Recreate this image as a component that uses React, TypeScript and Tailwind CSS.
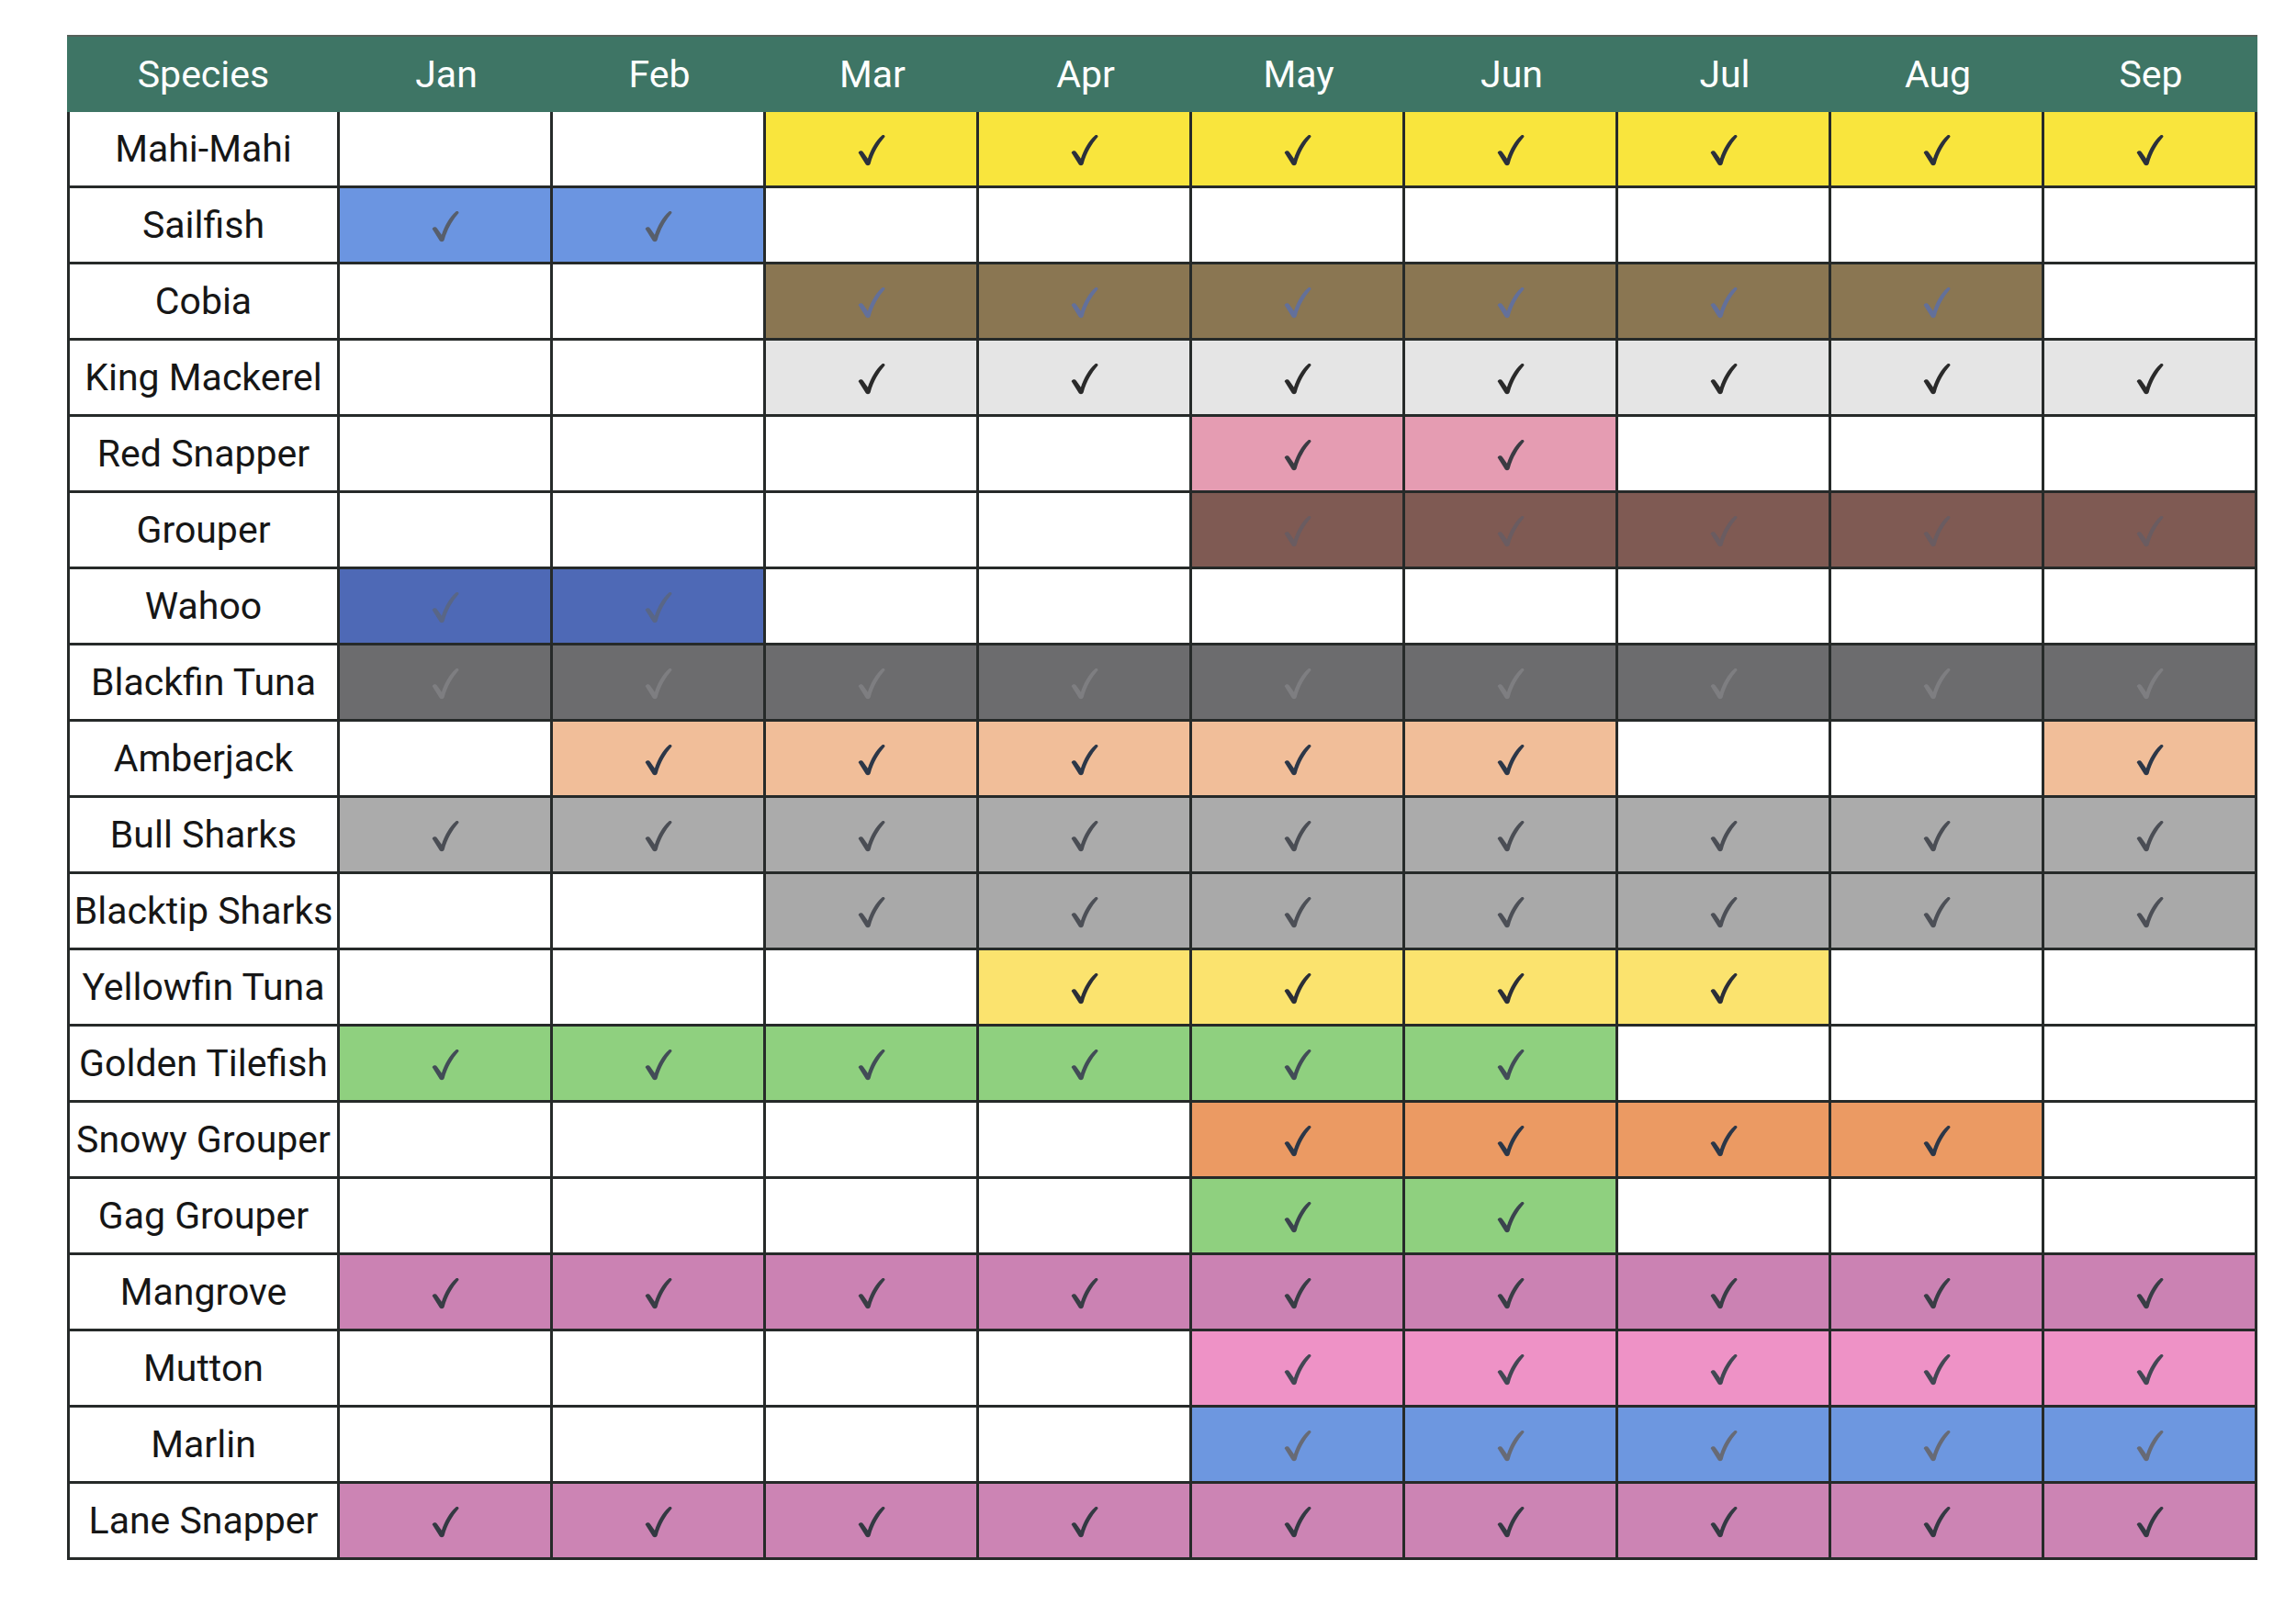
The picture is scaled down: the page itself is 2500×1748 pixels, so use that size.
import React from "react";

const months = ["Jan", "Feb", "Mar", "Apr", "May", "Jun", "Jul", "Aug", "Sep"];

type Row = { name: string; bg: string; check: string; on: number[] };

const rows: Row[] = [
  { name: "Mahi-Mahi", bg: "#f9e53d", check: "#2b303b", on: [2, 3, 4, 5, 6, 7, 8] },
  { name: "Sailfish", bg: "#6b95e1", check: "#575e6b", on: [0, 1] },
  { name: "Cobia", bg: "#8a7652", check: "#63709a", on: [2, 3, 4, 5, 6, 7] },
  { name: "King Mackerel", bg: "#e5e5e5", check: "#2a2a2a", on: [2, 3, 4, 5, 6, 7, 8] },
  { name: "Red Snapper", bg: "#e59cb2", check: "#3a3b42", on: [4, 5] },
  { name: "Grouper", bg: "#7f5a53", check: "#6a5c61", on: [4, 5, 6, 7, 8] },
  { name: "Wahoo", bg: "#4e69b6", check: "#596686", on: [0, 1] },
  { name: "Blackfin Tuna", bg: "#6c6c6e", check: "#7e7e81", on: [0, 1, 2, 3, 4, 5, 6, 7, 8] },
  { name: "Amberjack", bg: "#f1be99", check: "#2c3748", on: [1, 2, 3, 4, 5, 8] },
  { name: "Bull Sharks", bg: "#ababab", check: "#4a4d54", on: [0, 1, 2, 3, 4, 5, 6, 7, 8] },
  { name: "Blacktip Sharks", bg: "#a9a9a9", check: "#4c4f56", on: [2, 3, 4, 5, 6, 7, 8] },
  { name: "Yellowfin Tuna", bg: "#fbe36e", check: "#2b2e37", on: [3, 4, 5, 6] },
  { name: "Golden Tilefish", bg: "#8fd07f", check: "#424c57", on: [0, 1, 2, 3, 4, 5] },
  { name: "Snowy Grouper", bg: "#eb9a63", check: "#2b3748", on: [4, 5, 6, 7] },
  { name: "Gag Grouper", bg: "#8fd07f", check: "#3b434e", on: [4, 5] },
  { name: "Mangrove", bg: "#cb82b3", check: "#383d45", on: [0, 1, 2, 3, 4, 5, 6, 7, 8] },
  { name: "Mutton", bg: "#ee92c6", check: "#424753", on: [4, 5, 6, 7, 8] },
  { name: "Marlin", bg: "#6d97e0", check: "#676a75", on: [4, 5, 6, 7, 8] },
  { name: "Lane Snapper", bg: "#cc84b4", check: "#333942", on: [0, 1, 2, 3, 4, 5, 6, 7, 8] },
];

function Check({ color }: { color: string }) {
  return (
    <svg width="30" height="37" viewBox="0 0 28 32" aria-hidden="true" className="mt-[2px]">
      <path
        d="M0.6 18.6 C1.8 16.4 4.2 16.2 5.6 18 L10.2 24.6 C13.2 15.6 18 7 24.8 0.9 C26.2 -0.1 28.2 1.2 27.3 2.8 C21.2 9.8 15.6 19.2 12.8 29.8 C12.2 32 9.4 32.2 8.2 30.6 Z"
        fill={color}
      />
    </svg>
  );
}

export default function App() {
  return (
    <div className="w-[2500px] h-[1748px] bg-white pl-[73px] pt-[38px] font-['Roboto','Liberation_Sans',Arial,sans-serif]">
      <div className="w-[2385px]">
        <div className="grid grid-cols-[297px_repeat(9,232px)] h-[84px] bg-[#3e7565] border-t-2 border-[#55605a]">
          {["Species", ...months].map((m) => (
            <div key={m} className="flex items-center justify-center text-white text-[41px] leading-none">
              {m}
            </div>
          ))}
        </div>
        <div className="grid grid-cols-[291px_repeat(9,229px)] auto-rows-[80px] gap-[3px] bg-[#262a29] p-[3px] pt-0">
          {rows.map((r) => (
            <React.Fragment key={r.name}>
              <div className="bg-white flex items-center justify-center text-[41px] leading-none text-[#161616] whitespace-nowrap">
                {r.name}
              </div>
              {months.map((m, i) => {
                const on = r.on.includes(i);
                return (
                  <div
                    key={m}
                    className="flex items-center justify-center"
                    style={{ backgroundColor: on ? r.bg : "#ffffff" }}
                  >
                    {on && <Check color={r.check} />}
                  </div>
                );
              })}
            </React.Fragment>
          ))}
        </div>
      </div>
    </div>
  );
}
